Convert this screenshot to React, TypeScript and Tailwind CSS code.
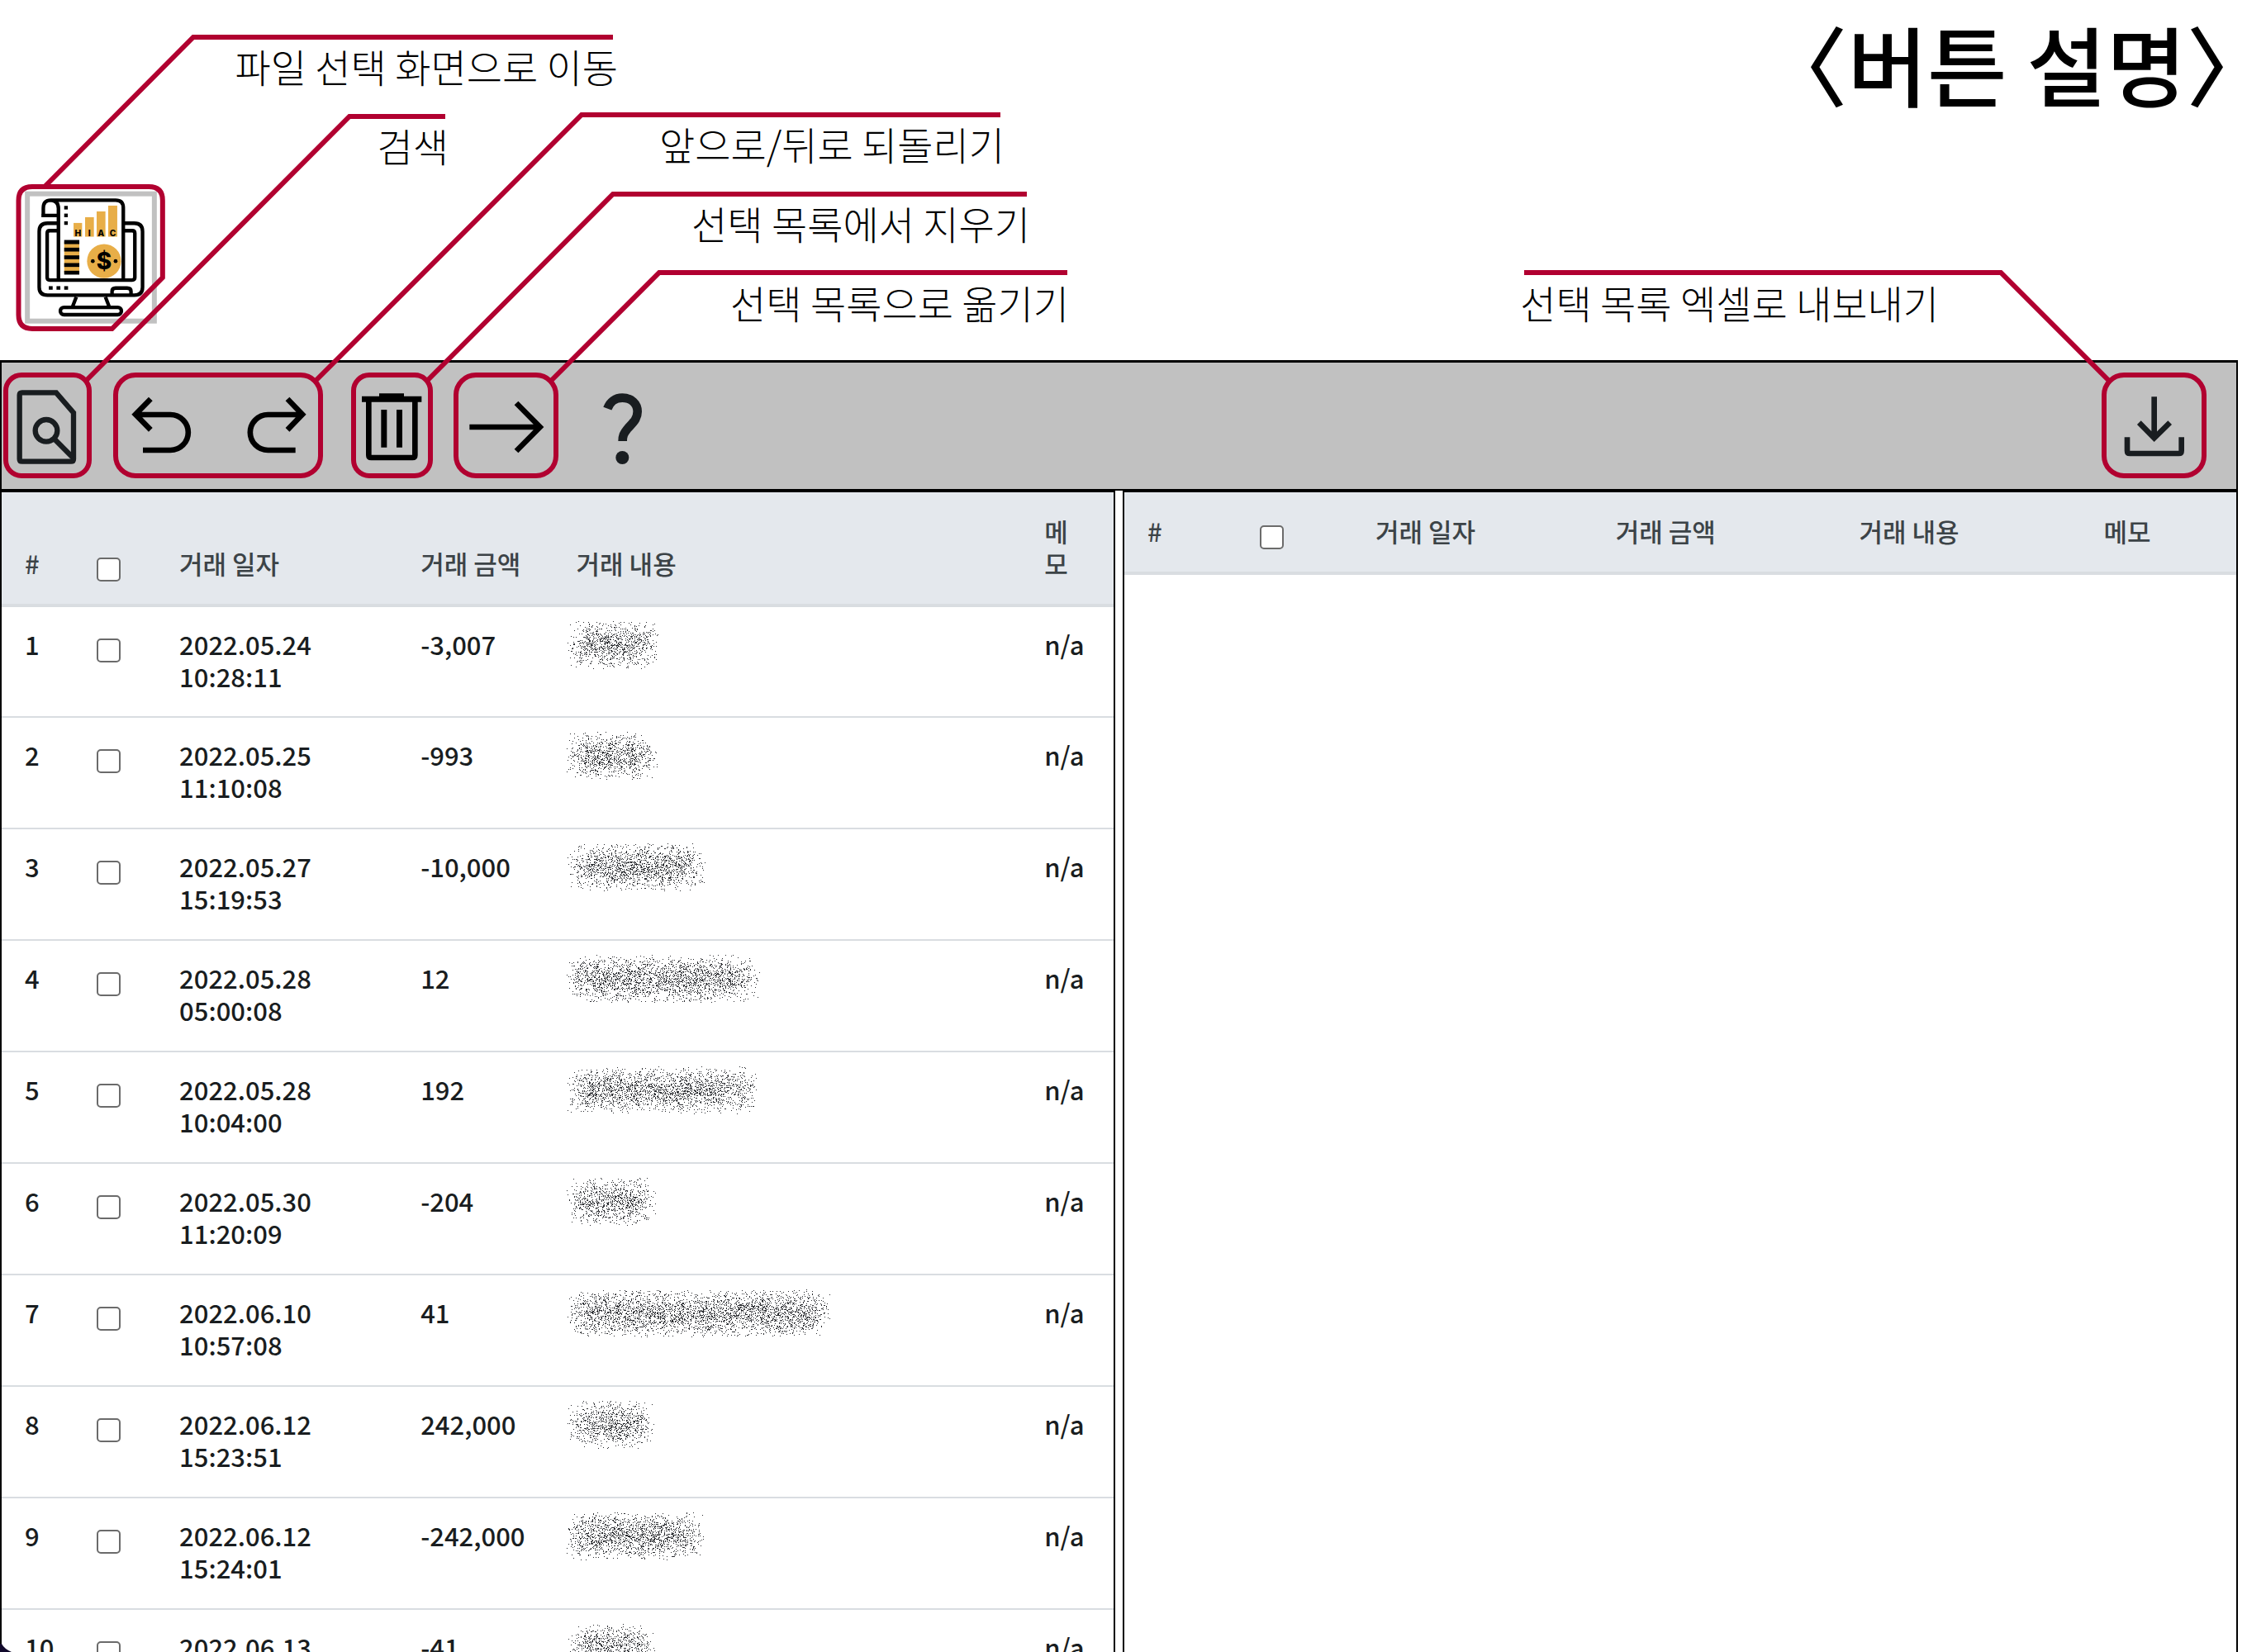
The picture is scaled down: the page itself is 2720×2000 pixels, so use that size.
import React from "react";

type Row = {
  id: number;
  date: string;
  time?: string;
  amount: string;
  width: number;
};

const rows: Row[] = [
  { id: 1, date: "2022.05.24", time: "10:28:11", amount: "-3,007", width: 112 },
  { id: 2, date: "2022.05.25", time: "11:10:08", amount: "-993", width: 110 },
  { id: 3, date: "2022.05.27", time: "15:19:53", amount: "-10,000", width: 168 },
  { id: 4, date: "2022.05.28", time: "05:00:08", amount: "12", width: 234 },
  { id: 5, date: "2022.05.28", time: "10:04:00", amount: "192", width: 232 },
  { id: 6, date: "2022.05.30", time: "11:20:09", amount: "-204", width: 108 },
  { id: 7, date: "2022.06.10", time: "10:57:08", amount: "41", width: 320 },
  { id: 8, date: "2022.06.12", time: "15:23:51", amount: "242,000", width: 106 },
  { id: 9, date: "2022.06.12", time: "15:24:01", amount: "-242,000", width: 168 },
  { id: 10, date: "2022.06.13", amount: "-41", width: 108 },
];

/* Speckled mask that hides the private description of a transaction. */
function specklePath(width: number, height: number, seed: number): string {
  let s = seed * 7919 + 17;
  const rand = () => {
    s = (s * 1664525 + 1013904223) % 4294967296;
    return s / 4294967296;
  };
  let d = "";
  for (let y = 0; y < height; y++) {
    const ey = Math.min(y, height - 1 - y) / 26;
    for (let x = 0; x < width; x++) {
      const ex = Math.min(x, width - 1 - x) / 30;
      const p = 0.29 * Math.min(1, ex + 0.06) * Math.min(1, ey + 0.08);
      if (rand() < p) d += `M${x} ${y}h1v1h-1z`;
    }
  }
  return d;
}

function Speckle({ width, seed }: { width: number; seed: number }) {
  const height = 58;
  return (
    <svg width={width} height={height} shapeRendering="crispEdges" fill="#2a2c30" aria-hidden="true">
      <path d={specklePath(width, height, seed)} />
    </svg>
  );
}

function Check({ label }: { label: string }) {
  return (
    <input
      type="checkbox"
      aria-label={label}
      className="mt-[13px] block size-[29px] appearance-none rounded-[5px] border-2 border-[#6b6b6b] bg-white"
    />
  );
}

const headCell = "pt-[27px] pb-[30px] pl-7 align-bottom font-medium";
const bodyCell = "pt-[25px] pl-7 align-top";

function LeftTable() {
  return (
    <table className="w-full table-fixed border-collapse text-left text-[31px] leading-[39px]">
      <colgroup>
        <col className="w-[6.5%]" />
        <col className="w-[7.4%]" />
        <col className="w-[21.7%]" />
        <col className="w-[14%]" />
        <col className="w-[42.1%]" />
        <col className="w-[8.3%]" />
      </colgroup>
      <thead>
        <tr className="border-b-4 border-[#d9dde1] bg-[#e4e8ed] text-[#3c4347]">
          <th className={headCell}>#</th>
          <th className="pb-[27px] pl-7 align-bottom">
            <Check label="전체 선택" />
          </th>
          <th className={headCell}>거래 일자</th>
          <th className={headCell}>거래 금액</th>
          <th className={headCell}>거래 내용</th>
          <th className={headCell}>
            메<br />모
          </th>
        </tr>
      </thead>
      <tbody className="font-medium text-[#191d20]">
        {rows.map((row) => (
          <tr key={row.id} className="h-[135px] border-b-2 border-[#d9dde1]">
            <td className={bodyCell}>{row.id}</td>
            <td className={bodyCell}>
              <Check label={`${row.id}번 거래 선택`} />
            </td>
            <td className={bodyCell}>
              {row.date}
              <br />
              {row.time}
            </td>
            <td className={bodyCell}>{row.amount}</td>
            <td className="pt-[17px] pl-4 align-top">
              <Speckle width={row.width} seed={row.id} />
            </td>
            <td className={bodyCell}>n/a</td>
          </tr>
        ))}
      </tbody>
    </table>
  );
}

function RightTable() {
  return (
    <table className="w-full table-fixed border-collapse text-left text-[31px] leading-[39px]">
      <colgroup>
        <col className="w-[10.1%]" />
        <col className="w-[10.4%]" />
        <col className="w-[21.6%]" />
        <col className="w-[21.9%]" />
        <col className="w-[22%]" />
        <col className="w-[14%]" />
      </colgroup>
      <thead>
        <tr className="border-b-4 border-[#d9dde1] bg-[#e4e8ed] text-[#3c4347]">
          <th className={headCell}>#</th>
          <th className="pb-[27px] pl-7 align-bottom">
            <Check label="선택 목록 전체 선택" />
          </th>
          <th className={headCell}>거래 일자</th>
          <th className={headCell}>거래 금액</th>
          <th className={headCell}>거래 내용</th>
          <th className={headCell}>메모</th>
        </tr>
      </thead>
    </table>
  );
}

function Logo() {
  return (
    <svg viewBox="57 70 543 535" className="h-[178px] w-[181px]" aria-hidden="true">
      <rect x="99" y="105" width="462" height="463" fill="#fff" stroke="#c1c1c1" strokeWidth="18" />
      <g fill="#e8ae48">
        <rect x="267" y="211" width="31" height="50" />
        <rect x="309" y="190" width="32" height="71" />
        <rect x="351" y="169" width="32" height="92" />
        <rect x="393" y="148" width="33" height="113" />
        <rect x="233" y="280" width="55" height="112" />
        <circle cx="378" cy="350" r="62" />
      </g>
      <g fill="none" stroke="#000" strokeWidth="13">
        <path d="M212 212H172Q142 212 142 242V445Q142 474 172 474H488Q518 474 518 445V242Q518 212 488 212H448" />
        <path d="M212 239H180Q171 239 171 248V410Q171 419 180 419H480Q490 419 490 410V248Q490 239 480 239H448" />
        <path d="M157 184V157Q157 128 184 128H420Q448 128 448 156V418M184 128Q212 130 212 158V418M150 184H212" />
        <path d="M407 474V460Q407 448 420 448H462Q476 448 476 460V474M277 480L264 514M383 480L396 514" />
        <rect x="219" y="518" width="222" height="27" rx="13" />
      </g>
      <g fill="#000">
        <rect x="233" y="149" width="13" height="13" />
        <rect x="233" y="177" width="13" height="13" />
        <rect x="233" y="205" width="13" height="13" />
        <rect x="177" y="441" width="14" height="13" />
        <rect x="205" y="441" width="14" height="13" />
        <rect x="233" y="441" width="14" height="13" />
        <rect x="233" y="273" width="55" height="15" />
        <rect x="233" y="301" width="55" height="14" />
        <rect x="233" y="329" width="55" height="14" />
        <rect x="233" y="357" width="55" height="14" />
        <rect x="233" y="385" width="55" height="14" />
        <circle cx="337" cy="350" r="7" />
        <circle cx="420" cy="350" r="7" />
      </g>
      <g fontFamily="Inter, sans-serif" fontWeight="800" textAnchor="middle" fill="#000">
        <text x="283" y="258" fontSize="31">H</text>
        <text x="325" y="258" fontSize="31">I</text>
        <text x="367" y="258" fontSize="31">A</text>
        <text x="410" y="258" fontSize="31">C</text>
        <text x="378" y="381" fontSize="84">$</text>
      </g>
      <path
        d="M117 79H541Q591 79 591 129V410L407 596H117Q67 596 67 546V129Q67 79 117 79Z"
        fill="none"
        stroke="#b10030"
        strokeWidth="18"
      />
    </svg>
  );
}

const label = "absolute text-right whitespace-nowrap";

function Callouts() {
  return (
    <div className="pointer-events-none absolute inset-0 z-10 text-[47px] leading-[60px] font-light text-black">
      <svg width="1300" height="470" className="absolute top-0 left-0" aria-hidden="true">
        <g fill="none" stroke="#b10030" strokeWidth="6">
          <path d="M742 45H234L54 226" />
          <path d="M539 141H423L105 460" />
          <path d="M1211 139H704L382 461" />
          <path d="M1243 235H742L517 461" />
          <path d="M1292 330H798L667 461" />
        </g>
      </svg>
      <svg width="880" height="470" className="absolute top-0 right-0" aria-hidden="true">
        <path d="M5 330H582L713 461" fill="none" stroke="#b10030" strokeWidth="6" />
      </svg>
      <p className={`${label} top-[50px] left-[234px] w-[514px]`}>파일 선택 화면으로 이동</p>
      <p className={`${label} top-[146px] left-[423px] w-[120px]`}>검색</p>
      <p className={`${label} top-[144px] left-[704px] w-[512px]`}>앞으로/뒤로 되돌리기</p>
      <p className={`${label} top-[240px] left-[742px] w-[505px]`}>선택 목록에서 지우기</p>
      <p className={`${label} top-[336px] left-[798px] w-[496px]`}>선택 목록으로 옮기기</p>
      <p className="absolute top-[336px] right-[373px] whitespace-nowrap">선택 목록 엑셀로 내보내기</p>
    </div>
  );
}

const boxed = "h-32 shrink-0 border-[6px] border-[#b10030]";

function Toolbar() {
  return (
    <div className="flex items-start border-b-2 border-black bg-[#c1c1c1] pt-3 pb-[13px] pl-0.5">
      <button type="button" aria-label="검색" className={`${boxed} w-[107px] rounded-[22px]`}>
        <svg viewBox="30 112 285 348" className="block size-full" fill="none" stroke="#191d20" strokeWidth="19">
          <path d="M80 167H204L267 240V408Q267 417 258 417H80Q71 417 71 408V176Q71 167 80 167Z" />
          <circle cx="168" cy="305" r="40" />
          <path d="M196 334L264 402" />
        </svg>
      </button>
      <div className={`${boxed} ml-[26px] flex w-[254px] rounded-[27px]`}>
        <button type="button" aria-label="뒤로 되돌리기" className="flex-1">
          <svg viewBox="429 112 363 348" className="block size-full" fill="none" stroke="#000" strokeWidth="20">
            <path d="M519 376H619A64.500 64.500 0 0 0 619 247H495M547 190L492 246L547 302" />
          </svg>
        </button>
        <button type="button" aria-label="앞으로 되돌리기" className="flex-1">
          <svg viewBox="792 112 363 348" className="block size-full" fill="none" stroke="#000" strokeWidth="20">
            <path d="M1073 376H973A64.500 64.500 0 0 1 973 247H1096M1044 190L1098 246L1044 302" />
          </svg>
        </button>
      </div>
      <button type="button" aria-label="선택 목록에서 지우기" className={`${boxed} ml-[34px] w-[99px] rounded-[22px]`}>
        <svg viewBox="94 112 261 348" className="block size-full" aria-hidden="true">
          <path d="M140 195V394Q140 403 149 403H299Q308 403 308 394V195" fill="none" stroke="#000" strokeWidth="20" />
          <path d="M115 180H178V170H268V180H332V201H115ZM185 229H206V366H185ZM241 229H262V366H241Z" />
        </svg>
      </button>
      <button type="button" aria-label="선택 목록으로 옮기기" className={`${boxed} ml-[25px] w-[127px] rounded-[27px]`}>
        <svg viewBox="467 112 345 348" className="block size-full" fill="none" stroke="#000" strokeWidth="20">
          <path d="M507 292H760M677 205L763 292L677 379" />
        </svg>
      </button>
      <button type="button" aria-label="도움말" className="ml-[51px] h-32 w-[55px] py-1.5">
        <svg viewBox="980 112 165 348" className="block size-full" aria-hidden="true">
          <path
            d="M1005 225C1014 200 1034 186 1059 186C1092 186 1114 207 1114 236C1114 265 1094 279 1077 299C1064 315 1060 324 1060 343"
            fill="none"
            stroke="#191d20"
            strokeWidth="32"
          />
          <circle cx="1059" cy="403" r="24" fill="#191d20" />
        </svg>
      </button>
      <button type="button" aria-label="선택 목록 엑셀로 내보내기" className={`${boxed} mr-9 ml-auto w-[127px] rounded-[27px]`}>
        <svg viewBox="449 473 345 348" className="block size-full" fill="none" stroke="#191d20" strokeWidth="20">
          <path d="M622 543V690M567 637L622 693L679 637M524 690V739Q524 749 534 749H711Q721 749 721 739V690" />
        </svg>
      </button>
    </div>
  );
}

export default function App() {
  return (
    <div className="relative flex h-screen flex-col overflow-hidden bg-white font-['Noto_Sans_CJK_KR',sans-serif]">
      <header className="flex h-[436px] shrink-0 items-end justify-between pr-[21px] pb-[35px] pl-[19px]">
        <button type="button" aria-label="파일 선택 화면으로 이동">
          <Logo />
        </button>
        <h1 className="self-start text-[105px] leading-[150px] font-medium text-black [font-feature-settings:'halt']">
          〈버튼 설명〉
        </h1>
      </header>
      <main className="mr-[11px] flex min-h-0 flex-1 flex-col border-x-2 border-t-[3px] border-black">
        <Toolbar />
        <div className="flex min-h-0 flex-1 gap-[9px]">
          <section className="min-w-0 flex-1 overflow-hidden border-t-2 border-r-2 border-black">
            <LeftTable />
          </section>
          <section className="min-w-0 flex-1 overflow-hidden border-t-2 border-l-2 border-black">
            <RightTable />
          </section>
        </div>
      </main>
      <Callouts />
      <svg width="14" height="10" className="absolute bottom-0 left-0" aria-hidden="true">
        <path d="M0 0H2Q5 6 14 10H0Z" fill="#120a2c" />
      </svg>
    </div>
  );
}
